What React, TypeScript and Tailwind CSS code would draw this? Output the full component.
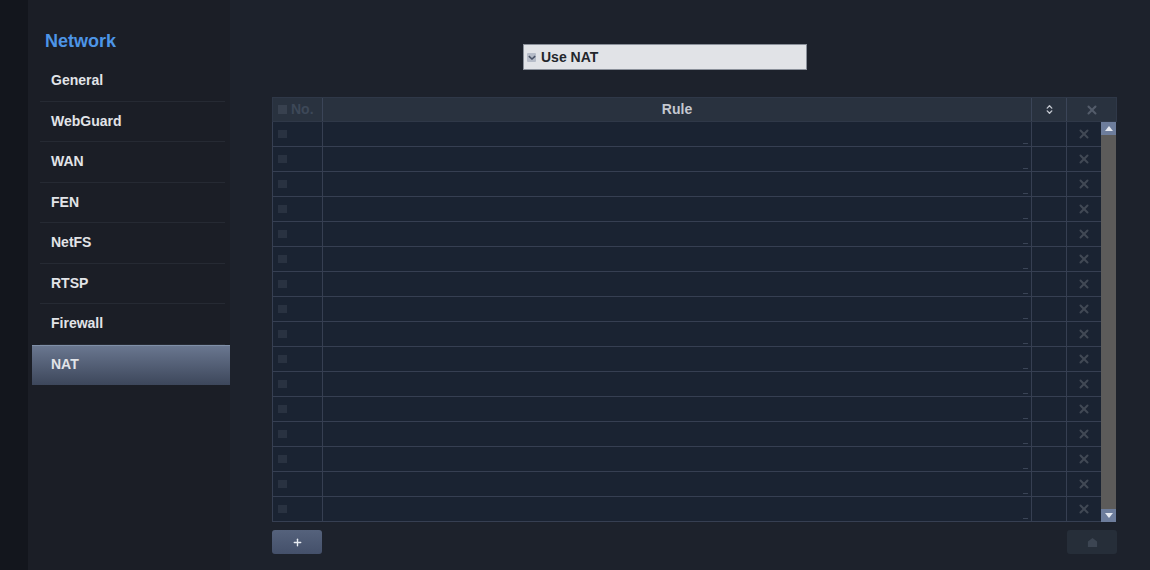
import { ChevronsUpDown, X, Plus } from "lucide-react";

const menu = ["General", "WebGuard", "WAN", "FEN", "NetFS", "RTSP", "Firewall", "NAT"];
const rows = Array.from({ length: 16 }, (_, i) => i);

function Sidebar() {
  return (
    <aside className="w-[202px] shrink-0 bg-[#1b1e26] pt-[30px]">
      <div className="pl-[17px] text-[18px] font-bold leading-[22px] text-[#4d95e6]">Network</div>
      <ul className="mt-[9px]">
        {menu.map((m) => {
          const active = m === "NAT";
          return (
            <li
              key={m}
              className={
                active
                  ? "ml-[4px] flex h-[40px] items-center bg-gradient-to-b from-[#6b7891] to-[#3d475b] pl-[19px] shadow-[inset_0_1px_0_#8090a8]"
                  : "ml-[12px] mr-[5px] flex h-[40.5px] items-center border-b border-[#262a33] pl-[11px]"
              }
            >
              <span className="text-[14px] font-bold text-[#e2e4e8]">{m}</span>
            </li>
          );
        })}
      </ul>
    </aside>
  );
}

function Checkbox() {
  return (
    <span className="flex h-[9px] w-[9px] items-center justify-center rounded-[1px] bg-[#b6bcc8]">
      <svg viewBox="0 0 10 10" className="h-[8px] w-[8px]">
        <path d="M1 4 L5 7.5 L9 4" stroke="#4b5468" strokeWidth="2" fill="none" />
      </svg>
    </span>
  );
}

function Table() {
  return (
    <div className="w-[845px]">
      <div className="flex h-[25px] border border-[#2f3848] bg-[#29323f] text-[14px] font-bold">
        <div className="flex w-[50px] items-center gap-[4px] border-r border-[#3b4558] pl-[5px] text-[#3d4858]">
          <span className="h-[9px] w-[9px] bg-[#38414f]" />
          No.
        </div>
        <div className="flex flex-1 items-center justify-center border-r border-[#3b4558] text-[#c4c8d0]">Rule</div>
        <div className="flex w-[35px] items-center justify-center border-r border-[#3b4558] text-[#c4c8d0]">
          <ChevronsUpDown size={11} strokeWidth={3} />
        </div>
        <div className="flex w-[49px] items-center justify-center text-[#535c6a]">
          <X size={14} strokeWidth={3.5} />
        </div>
      </div>
      <div className="flex">
        <div className="flex-1">
          {rows.map((r) => (
            <div key={r} className="flex h-[25px] border-b border-l border-[#363f52] bg-[#1a2332]">
              <div className="flex w-[50px] items-center border-r border-[#363f52] pl-[5px]">
                <span className="h-[8px] w-[9px] bg-[#293241]" />
              </div>
              <div className="relative flex-1 border-r border-[#363f52]">
                <span className="absolute bottom-[2px] right-[3px] h-[1px] w-[5px] bg-[#3a4456]" />
              </div>
              <div className="w-[35px] border-r border-[#363f52]" />
              <div className="flex w-[34px] items-center justify-center text-[#414955]">
                <X size={14} strokeWidth={3.5} />
              </div>
            </div>
          ))}
        </div>
        <div className="flex w-[15px] flex-col bg-[#5c5b5a]">
          <div className="flex h-[13px] items-center justify-center bg-[#6d7d9c]">
            <span className="h-0 w-0 border-x-[4px] border-b-[5px] border-x-transparent border-b-[#e4e8f0]" />
          </div>
          <div className="flex-1" />
          <div className="flex h-[13px] items-center justify-center bg-[#6d7d9c]">
            <span className="h-0 w-0 border-x-[4px] border-t-[5px] border-x-transparent border-t-[#e4e8f0]" />
          </div>
        </div>
        <div className="w-[1px]" />
      </div>
      <div className="mt-[8px] flex justify-between">
        <button className="flex h-[24px] w-[50px] items-center justify-center rounded-[3px] bg-gradient-to-b from-[#55627c] to-[#44506a] text-[#e8ecf2]">
          <Plus size={11} strokeWidth={3} />
        </button>
        <button className="flex h-[24px] w-[50px] items-center justify-center rounded-[3px] bg-[#262e39] text-[#3c4552]">
          <svg viewBox="0 0 12 12" className="h-[11px] w-[11px]">
            <path d="M6 1 L11 5 L11 11 L1 11 L1 5 Z" fill="currentColor" />
          </svg>
        </button>
      </div>
    </div>
  );
}

export default function App() {
  return (
    <div className="flex h-[570px] w-[1150px] bg-[#13161d] font-['Liberation_Sans',Arial,sans-serif]">
      <div className="w-[28px] shrink-0" />
      <Sidebar />
      <main className="flex flex-1 flex-col bg-[#1d222c] pl-[42px] pt-[44px]">
        <div className="ml-[251px] flex h-[26px] w-[284px] items-center gap-[5px] border border-[#8a909a] bg-[#e1e3e7] pl-[3px]">
          <Checkbox />
          <span className="text-[14px] font-bold text-[#23262c]">Use NAT</span>
        </div>
        <div className="mt-[27px]">
          <Table />
        </div>
      </main>
    </div>
  );
}
